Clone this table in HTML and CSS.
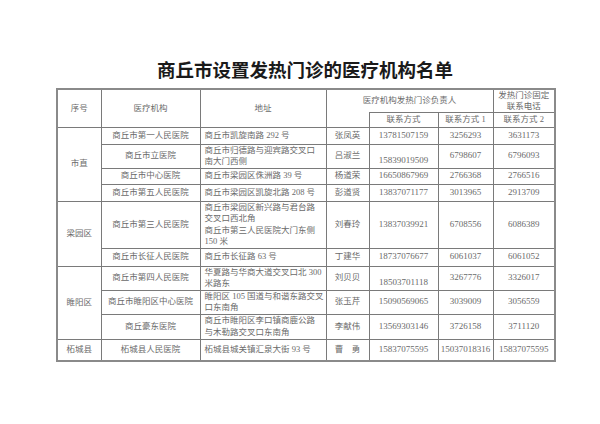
FILE: index.html
```html
<!DOCTYPE html>
<html lang="zh-CN">
<head>
<meta charset="utf-8">
<title>商丘市设置发热门诊的医疗机构名单</title>
<link rel="stylesheet" href="styles.css">
</head>
<body>
<div class="page">
  <h1 class="title">商丘市设置发热门诊的医疗机构名单</h1>
  <table class="list">
    <colgroup>
      <col class="c-no"><col class="c-org"><col class="c-addr"><col class="c-name"><col class="c-p1"><col class="c-p2"><col class="c-p3">
    </colgroup>
    <tr class="h-a">
      <td rowspan="2">序号</td>
      <td rowspan="2">医疗机构</td>
      <td rowspan="2">地址</td>
      <td colspan="3">医疗机构发热门诊负责人</td>
      <td class="tight">发热门诊固定<br>联系电话</td>
    </tr>
    <tr class="h-b">
      <td class="notop"></td>
      <td>联系方式</td>
      <td>联系方式 1</td>
      <td>联系方式 2</td>
    </tr>
    <tr class="r17">
      <td rowspan="4">市直</td>
      <td>商丘市第一人民医院</td>
      <td class="addr">商丘市凯旋南路 292 号</td>
      <td>张凤英</td>
      <td class="num">13781507159</td>
      <td class="num">3256293</td>
      <td class="num">3631173</td>
    </tr>
    <tr class="r22">
      <td>商丘市立医院</td>
      <td class="addr">商丘市归德路与迎宾路交叉口<br>南大门西侧</td>
      <td>吕淑兰</td>
      <td class="num low">15839019509</td>
      <td class="num">6798607</td>
      <td class="num">6796093</td>
    </tr>
    <tr class="r16">
      <td>商丘市中心医院</td>
      <td class="addr">商丘市梁园区侏洲路 39 号</td>
      <td>杨道荣</td>
      <td class="num">16650867969</td>
      <td class="num">2766368</td>
      <td class="num">2766516</td>
    </tr>
    <tr class="r17">
      <td>商丘市第五人民医院</td>
      <td class="addr">商丘市梁园区凯旋北路 208 号</td>
      <td>彭道贤</td>
      <td class="num">13837071177</td>
      <td class="num">3013965</td>
      <td class="num">2913709</td>
    </tr>
    <tr class="r47">
      <td rowspan="2">梁园区</td>
      <td>商丘市第三人民医院</td>
      <td class="addr">商丘市梁园区新兴路与君台路<br>交叉口西北角<br>商丘市第三人民医院大门东侧<br>150 米</td>
      <td>刘春玲</td>
      <td class="num">13837039921</td>
      <td class="num">6708556</td>
      <td class="num">6086389</td>
    </tr>
    <tr class="r18">
      <td>商丘市长征人民医院</td>
      <td class="addr">商丘市长征路 63 号</td>
      <td>丁建华</td>
      <td class="num">18737076677</td>
      <td class="num">6061037</td>
      <td class="num">6061052</td>
    </tr>
    <tr class="r23">
      <td rowspan="3">睢阳区</td>
      <td>商丘市第四人民医院</td>
      <td class="addr">华夏路与华商大道交叉口北 300<br>米路东</td>
      <td>刘贝贝</td>
      <td class="num low">18503701118</td>
      <td class="num">3267776</td>
      <td class="num">3326017</td>
    </tr>
    <tr class="r23">
      <td>商丘市睢阳区中心医院</td>
      <td class="addr">睢阳区 105 国道与和谐东路交叉<br>口东南角</td>
      <td>张玉芹</td>
      <td class="num">15090569065</td>
      <td class="num">3039009</td>
      <td class="num">3056559</td>
    </tr>
    <tr class="r25">
      <td>商丘豪东医院</td>
      <td class="addr">商丘市睢阳区李口镇商鹿公路<br>与木勒路交叉口东南角</td>
      <td>李献伟</td>
      <td class="num">13569303146</td>
      <td class="num">3726158</td>
      <td class="num">3711120</td>
    </tr>
    <tr class="r22">
      <td>柘城县</td>
      <td>柘城县人民医院</td>
      <td class="addr">柘城县城关镇汇泉大街 93 号</td>
      <td>曹&nbsp;&nbsp;&nbsp;&nbsp;勇</td>
      <td class="num">15837075595</td>
      <td class="num">15037018316</td>
      <td class="num">15837075595</td>
    </tr>
  </table>
</div>
</body>
</html>
```

FILE: styles.css
```css
html, body {
  margin: 0;
  padding: 0;
  background: #ffffff;
}

.page {
  width: 600px;
  height: 424px;
  padding-top: 58px;
  box-sizing: border-box;
  font-family: "Liberation Serif", "Noto Sans CJK SC", serif;
}

.title {
  margin: 0 0 8px 0;
  padding-left: 10px;
  height: 22px;
  line-height: 22px;
  font-size: 18.5px;
  font-weight: 700;
  text-align: center;
  color: #1a1a1a;
  font-family: "Noto Sans CJK SC", sans-serif;
}

.list {
  margin-left: 56px;
  width: 498px;
  table-layout: fixed;
  border-collapse: collapse;
  border: 2px solid #8a8a8a;
  font-size: 8.5px;
  line-height: 11.5px;
  color: #6a6a6a;
}

.list td {
  border: 1px solid #7a7a7a;
  padding: 0;
  text-align: center;
  vertical-align: middle;
  white-space: nowrap;
  overflow: hidden;
}

.c-no { width: 44px; }
.c-org { width: 99px; }
.c-addr { width: 126px; }
.c-name { width: 43px; }
.c-p1 { width: 69px; }
.c-p2 { width: 55px; }
.c-p3 { width: 62px; }

.list td.addr {
  text-align: left;
  padding-left: 4px;
}

.list td.notop {
  border-top: hidden;
}

.list td.tight {
  line-height: 10.5px;
}

.list td.num {
  font-size: 9px;
}

.list td.low {
  vertical-align: bottom;
  padding-bottom: 1px;
}

.h-a { height: 23px; }
.h-b { height: 15px; }
.r16 { height: 16px; }
.r17 { height: 17px; }
.r18 { height: 18px; }
.r22 { height: 22px; }
.r23 { height: 23px; }
.r25 { height: 25px; }
.r47 { height: 47px; }
```
